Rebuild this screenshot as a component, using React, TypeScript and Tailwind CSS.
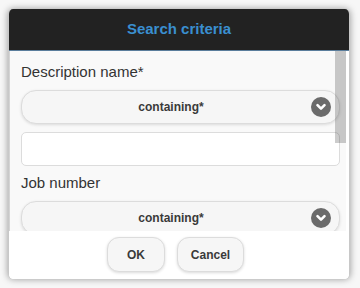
import { useState } from "react";

function Chevron() {
  return (
    <span className="w-5 h-5 rounded-full bg-[#6b6b6b] flex items-center justify-center shrink-0">
      <svg width="12" height="12" viewBox="0 0 12 12" fill="none">
        <path d="M2.5 4.2 6 7.7 9.5 4.2" stroke="#fff" strokeWidth="2.6" strokeLinecap="round" strokeLinejoin="round" />
      </svg>
    </span>
  );
}

function SelectButton({ label }: { label: string }) {
  return (
    <button className="h-[34px] w-full shrink-0 rounded-[15px] border border-[#dcdcdc] bg-[#f6f6f6] shadow-[0_1px_3px_rgba(0,0,0,0.12)] flex items-center pl-[9px] pr-[8px]">
      <span className="flex-1 text-center text-[12px] font-bold text-[#3a3a3a]">{label}</span>
      <Chevron />
    </button>
  );
}

export default function App() {
  const [desc, setDesc] = useState("");

  return (
    <div
      className="w-[360px] h-[288px] bg-[#f7f7f7] pt-[9px] pl-[8px]"
      style={{ fontFamily: '"Liberation Sans", Arial, sans-serif' }}
    >
      <div className="w-[342px] h-[270px] rounded-[5px] overflow-hidden flex flex-col shadow-[0_0_7px_rgba(0,0,0,0.4)] border-x border-[#c8c8c8] bg-white">
        {/* Header */}
        <div className="h-[42px] shrink-0 bg-[#222] border-b border-[#5a7d9c] flex items-center justify-center">
          <span className="text-[15px] font-bold text-[#3a8fd0]">Search criteria</span>
        </div>

        {/* Body */}
        <div className="relative h-[180px] shrink-0 flex bg-[#f9f9f9]">
          <div className="flex-1 overflow-hidden border-l border-[#d4d4d4] pl-[11px] pr-[6px] pt-[11px] flex flex-col">
            <label className="text-[15px] leading-5 text-[#333]">Description name*</label>
            <div className="mt-2">
              <SelectButton label="containing*" />
            </div>
            <input
              value={desc}
              onChange={(e) => setDesc(e.target.value)}
              className="mt-2 h-[34px] shrink-0 w-full rounded-[5px] border border-[#dcdcdc] bg-white px-2 text-[15px] outline-none"
            />
            <label className="mt-[7px] text-[15px] leading-5 text-[#333]">Job number</label>
            <div className="mt-2">
              <SelectButton label="containing*" />
            </div>
          </div>
          <div className="w-[3px] shrink-0 bg-white" />
          {/* scrollbar thumb */}
          <div className="absolute right-[3px] top-0 w-[11px] h-[92px] bg-black/20" />
        </div>

        {/* Footer */}
        <div className="flex-1 bg-white flex justify-center gap-3 pt-[6px] pr-[7px]">
          <button className="h-[35px] w-[58px] rounded-[12px] border border-[#dcdcdc] bg-[#f6f6f6] shadow-[0_1px_3px_rgba(0,0,0,0.15)] text-[12px] font-bold text-[#3a3a3a]">
            OK
          </button>
          <button className="h-[35px] w-[67px] rounded-[12px] border border-[#dcdcdc] bg-[#f6f6f6] shadow-[0_1px_3px_rgba(0,0,0,0.15)] text-[12px] font-bold text-[#3a3a3a]">
            Cancel
          </button>
        </div>
      </div>
    </div>
  );
}
